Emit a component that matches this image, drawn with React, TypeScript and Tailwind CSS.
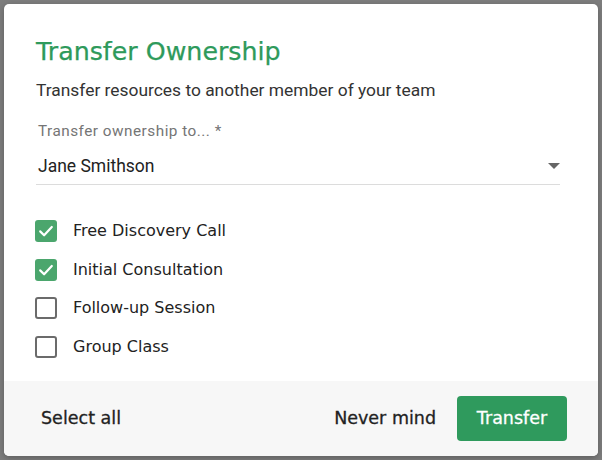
import React, { useState } from 'react';

const items = [
    { id: 'free', label: 'Free Discovery Call', checked: true },
    { id: 'initial', label: 'Initial Consultation', checked: true },
    { id: 'follow', label: 'Follow-up Session', checked: false },
    { id: 'group', label: 'Group Class', checked: false },
];

const display = { fontFamily: '"DejaVu Sans", "Noto Sans", sans-serif' };
const body = { fontFamily: 'Roboto, "Liberation Sans", sans-serif' };

export default function App() {
    const [checked, setChecked] = useState<Record<string, boolean>>(
        Object.fromEntries(items.map(i => [i.id, i.checked]))
    );

    const selectAll = () => setChecked(Object.fromEntries(items.map(i => [i.id, true])));

    return (
        <div className="w-[602px] h-[460px] bg-[#7d7d7d] p-[4px]">
            <div className="h-full bg-white rounded-[5px] overflow-hidden flex flex-col shadow-[0_2px_6px_rgba(0,0,0,0.25)]">
                {/* Body */}
                <div className="flex-grow pl-[32px] pr-[38px] pt-[33px]">
                    <h2 className="text-[25.3px] leading-[30px] text-[#2e9a5b] [-webkit-text-stroke:0.25px_#2e9a5b]" style={display}>
                        Transfer Ownership
                    </h2>
                    <p className="mt-[13px] text-[17.4px] leading-[20px] text-[#333]" style={body}>
                        Transfer resources to another member of your team
                    </p>

                    {/* Select */}
                    <div className="mt-[22px] border-b border-[#dcdcdc] pb-[8px]" style={body}>
                        <div className="pl-[2px] text-[15.3px] leading-[18px] tracking-[0.5px] text-[#757575]">
                            Transfer ownership to... *
                        </div>
                        <div className="mt-[15.5px] flex items-center justify-between pl-[2px]">
                            <span className="text-[17.5px] leading-[20px] text-[#222]">Jane Smithson</span>
                            <span className="w-0 h-0 border-l-[6px] border-r-[6px] border-t-[6px] border-l-transparent border-r-transparent border-t-[#666]" />
                        </div>
                    </div>

                    {/* Resources */}
                    <div className="mt-[35.5px] flex flex-col gap-[16.7px]">
                        {items.map(item => (
                            <div
                                key={item.id}
                                onClick={() => setChecked(p => ({ ...p, [item.id]: !p[item.id] }))}
                                className="flex items-center h-[22px] ml-[-1px] gap-[16px] cursor-pointer select-none"
                            >
                                <span
                                    className={`w-[22px] h-[22px] rounded-[3px] flex items-center justify-center ${checked[item.id] ? 'bg-[#4ba66d]' : 'border-2 border-[#6b6b6b] bg-white'}`}
                                >
                                    {checked[item.id] && (
                                        <svg viewBox="0 0 22 22" className="w-[22px] h-[22px]" fill="none" stroke="white" strokeWidth="2.2" strokeLinecap="round" strokeLinejoin="round">
                                            <path d="M5.2 11.4l3.9 3.9 7.7-8.3" />
                                        </svg>
                                    )}
                                </span>
                                <span className="text-[16px] leading-[22px] text-[#222]" style={display}>{item.label}</span>
                            </div>
                        ))}
                    </div>
                </div>

                {/* Footer */}
                <div className="h-[75px] bg-[#f7f7f7] flex items-center justify-between pl-[33px] pr-[31px] [-webkit-text-stroke:0.3px_currentColor]" style={display}>
                    <button onClick={selectAll} className="px-[4px] py-[8px] text-[17.5px] text-[#222]">
                        Select all
                    </button>
                    <div className="flex items-center gap-[21px]">
                        <button className="py-[8px] text-[17.5px] text-[#222]">Never mind</button>
                        <button className="w-[110px] h-[45px] rounded-[4px] bg-[#2f9a5d] text-white text-[17.5px]">
                            Transfer
                        </button>
                    </div>
                </div>
            </div>
        </div>
    );
}
